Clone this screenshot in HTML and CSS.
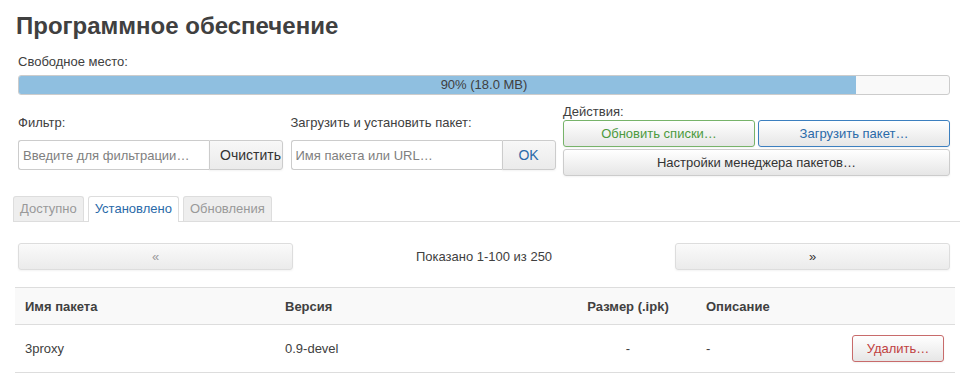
FILE: index.html
```html
<!DOCTYPE html>
<html lang="ru">
<head>
  <meta charset="UTF-8">
  <title>Программное обеспечение</title>
  <link rel="stylesheet" href="styles.css">
</head>
<body>

<div class="page">
  <h2 class="title">Программное обеспечение</h2>

  <div class="free-label">Свободное место:</div>
  <div class="progress">
    <div class="progress-bar" style="width: 90%"></div>
    <div class="progress-text">90% (18.0 MB)</div>
  </div>

  <div class="controls">
    <div class="ctl ctl-low">
      <label>Фильтр:</label>
      <div class="input-group">
        <input placeholder="Введите для фильтрации…">
        <button class="btn btn-addon">Очистить</button>
      </div>
    </div>

    <div class="ctl ctl-low">
      <label>Загрузить и установить пакет:</label>
      <div class="input-group">
        <input placeholder="Имя пакета или URL…">
        <button class="btn btn-addon btn-ok">OK</button>
      </div>
    </div>

    <div class="ctl">
      <label>Действия:</label>
      <div class="actions">
        <button class="btn btn-green">Обновить списки…</button>
        <button class="btn btn-blue">Загрузить пакет…</button>
        <button class="btn btn-wide">Настройки менеджера пакетов…</button>
      </div>
    </div>
  </div>

  <ul class="tabs">
    <li class="tab">Доступно</li>
    <li class="tab active">Установлено</li>
    <li class="tab">Обновления</li>
  </ul>

  <div class="pager">
    <button class="btn btn-page btn-dim">«</button>
    <div class="pager-info">Показано 1-100 из 250</div>
    <button class="btn btn-page">»</button>
  </div>

  <table class="pkgs">
    <thead>
      <tr>
        <th class="col-name">Имя пакета</th>
        <th class="col-ver">Версия</th>
        <th class="col-size">Размер (.ipk)</th>
        <th class="col-desc">Описание</th>
        <th class="col-act"></th>
      </tr>
    </thead>
    <tbody>
      <tr>
        <td>3proxy</td>
        <td>0.9-devel</td>
        <td class="col-size">-</td>
        <td>-</td>
        <td class="col-act"><button class="btn btn-red">Удалить…</button></td>
      </tr>
    </tbody>
  </table>
</div>

</body>
</html>
```

FILE: styles.css
```css
body {
  margin: 0;
  font-family: "Liberation Sans", Arial, sans-serif;
  font-size: 13px;
  color: #404040;
  background: #fff;
}
.page {
  padding: 0 10px 0 18px;
}
.title {
  margin: 11px 0 0 -2px;
  font-size: 24px;
  line-height: 29px;
  font-weight: bold;
  color: #404040;
}
.free-label {
  margin-top: 13px;
  line-height: 18px;
}
.progress {
  margin-top: 4px;
  height: 18px;
  border: 1px solid #ccc;
  border-radius: 3px;
  background: #f9f9f9;
  display: grid;
  overflow: hidden;
}
.progress-bar, .progress-text {
  grid-area: 1 / 1;
}
.progress-bar {
  background: #8fbfe0;
  height: 18px;
}
.progress-text {
  text-align: center;
  line-height: 18px;
  color: #404040;
}
.controls {
  margin-top: 8px;
  display: grid;
  grid-template-columns: 265px 265px 387px;
  justify-content: space-between;
}
.ctl label {
  display: block;
  line-height: 17px;
}
.ctl-low {
  padding-top: 11px;
}
.ctl-low label {
  margin-bottom: 9px;
}
.input-group {
  display: flex;
  height: 30px;
}
.input-group input {
  flex: 1;
  min-width: 0;
  box-sizing: border-box;
  height: 30px;
  padding: 0 4px;
  border: 1px solid #ccc;
  border-right: none;
  border-radius: 3px 0 0 3px;
  font-family: inherit;
  font-size: 13px;
  color: #404040;
}
.input-group input::placeholder {
  color: #808080;
}
.btn {
  font-family: inherit;
  font-size: 13px;
  color: #333;
  border: 1px solid #ccc;
  border-radius: 3px;
  background: linear-gradient(#fff, #e6e6e6);
  box-shadow: inset 0 1px 0 rgba(255,255,255,.2), 0 1px 2px rgba(0,0,0,.05);
  cursor: pointer;
  box-sizing: border-box;
  height: 27px;
  padding: 0 10px;
}
.btn-addon {
  height: 30px;
  width: 74px;
  border-radius: 0 3px 3px 0;
  font-size: 14px;
  background: linear-gradient(#f7f7f7, #ebebeb);
}
.btn-ok {
  width: 54px;
  color: #2a6aa9;
}
.actions {
  display: grid;
  grid-template-columns: 1fr 1fr;
  column-gap: 3px;
  row-gap: 2px;
}
.btn-green {
  color: #4c9a3d;
  border-color: #77b36a;
}
.btn-blue {
  color: #2a6aa9;
  border-color: #3c7fbf;
}
.btn-wide {
  grid-column: 1 / 3;
}
.tabs {
  list-style: none;
  margin: 20px -10px 0 -5px;
  padding: 0;
  display: flex;
  gap: 4px;
  border-bottom: 1px solid #ddd;
}
.tab {
  height: 24px;
  line-height: 24px;
  padding: 0 6px;
  margin-bottom: -1px;
  border: 1px solid #ddd;
  border-bottom: none;
  border-radius: 3px 3px 0 0;
  background: #eee;
  color: #999;
}
.tab.active {
  background: #fff;
  color: #2a6aa9;
  height: 25px;
}
.pager {
  margin-top: 21px;
  display: grid;
  grid-template-columns: 275px 1fr 275px;
  align-items: center;
}
.btn-page {
  background: linear-gradient(#fafafa, #ebebeb);
  border-color: #ddd;
}
.btn-dim {
  color: #999;
}
.pager-info {
  text-align: center;
}
.pkgs {
  margin: 17px -5px 0 -3px;
  width: calc(100% + 8px);
  border-collapse: collapse;
}
.pkgs th, .pkgs td {
  text-align: left;
  padding: 0 10px;
  border-top: 1px solid #ddd;
  border-bottom: 1px solid #ddd;
}
.pkgs th {
  background: #f9f9f9;
  height: 36px;
  font-weight: bold;
}
.pkgs td {
  height: 47px;
}
.col-name { width: 240px; }
.col-ver { width: 265px; }
.pkgs .col-size {
  width: 116px;
  text-align: center;
}
.col-desc { width: 120px; }
.pkgs .col-act {
  text-align: right;
  padding-right: 11px;
}
.btn-red {
  color: #c0413f;
  border-color: #c86b6b;
  width: 92px;
}
```
